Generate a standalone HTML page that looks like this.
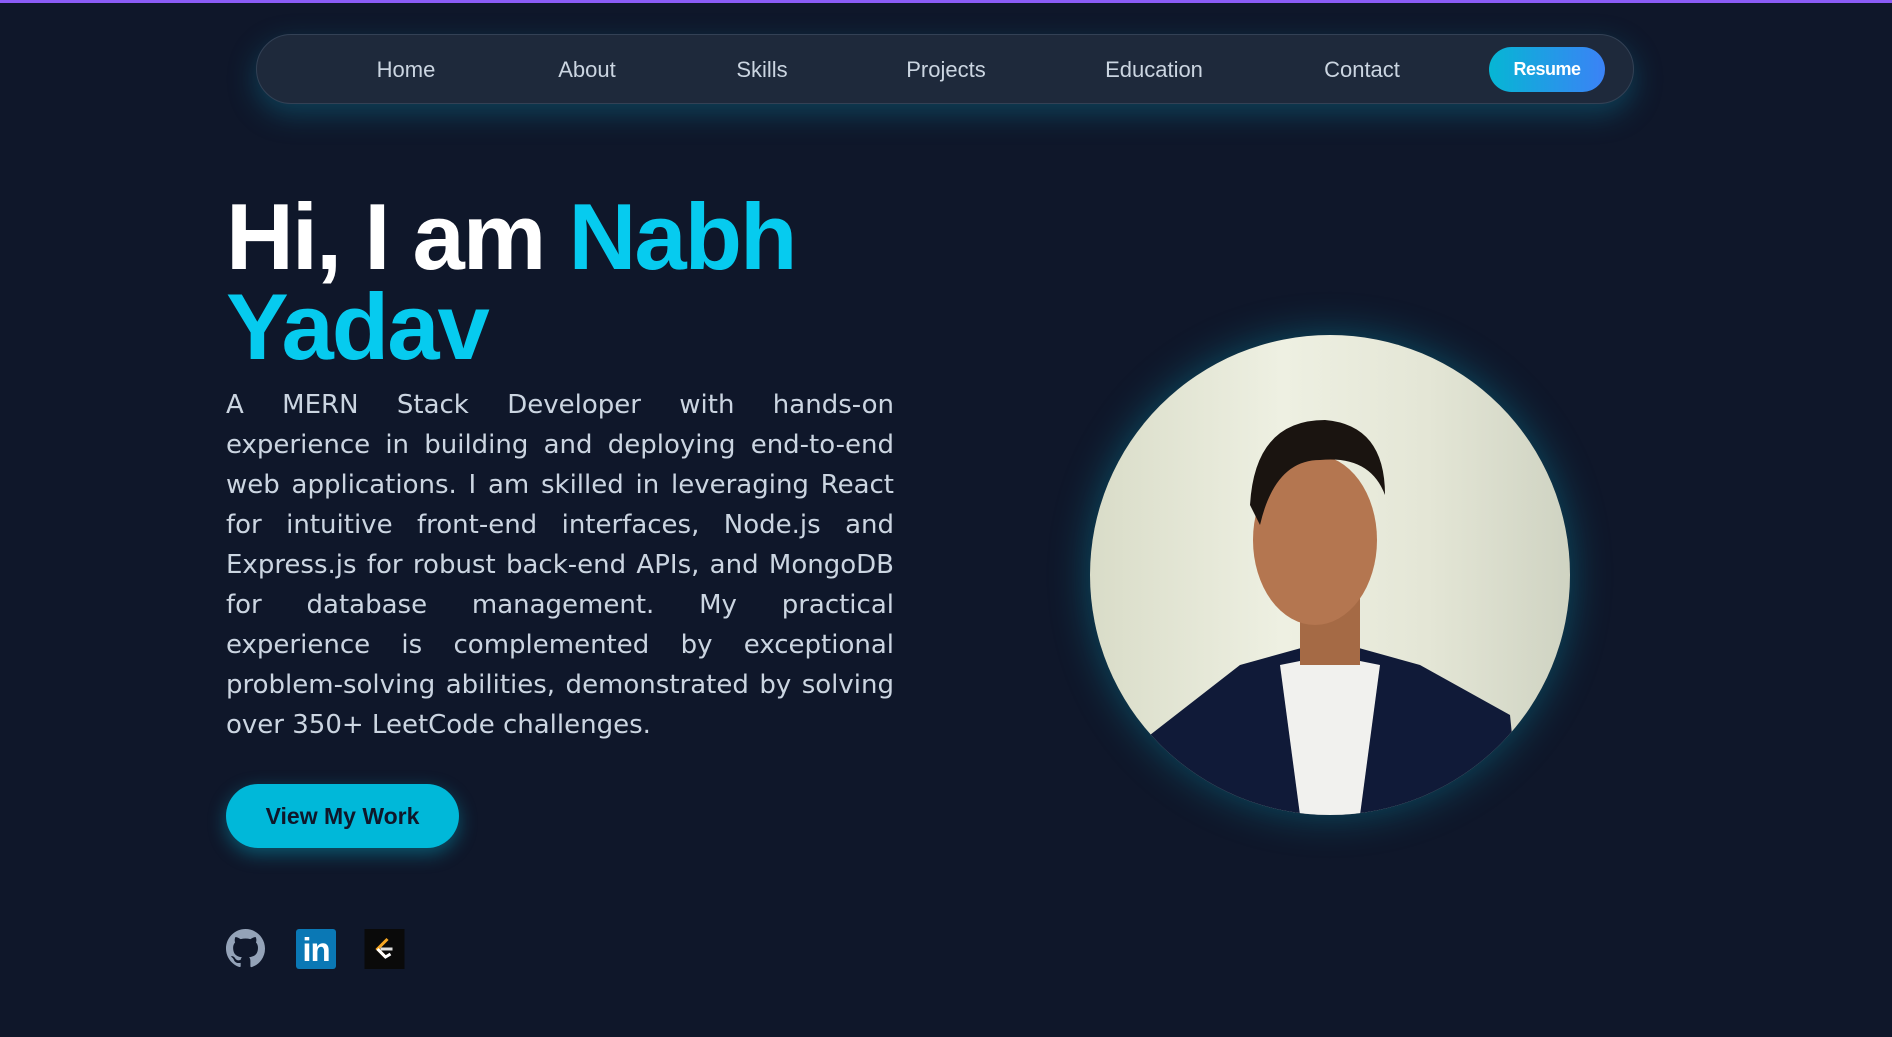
<!DOCTYPE html>
<html><head><meta charset="utf-8"><style>
*{margin:0;padding:0;box-sizing:border-box}
body{width:1892px;height:1037px;background:#0f172a;overflow:hidden;font-family:"Liberation Sans","DejaVu Sans",sans-serif;position:relative}
.top{position:absolute;left:0;top:0;width:100%;height:3px;background:#8b5cf6}
nav{position:absolute;left:256px;top:34px;width:1378px;height:70px;border-radius:35px;background:#1e293b;border:1px solid #334155;box-shadow:0 10px 28px rgba(14,116,144,.45)}
nav a{position:absolute;top:22px;color:#cbd5e1;font-size:22px;transform:translateX(-50%);white-space:nowrap}
.res{position:absolute;left:1232px;top:12px;width:116px;height:45px;border-radius:23px;background:linear-gradient(90deg,#06b6d4,#3b82f6);color:#fff;font-weight:bold;font-size:18px;text-align:center;line-height:45px;letter-spacing:-.5px}
h1{position:absolute;left:226px;top:192px;font-size:94px;line-height:90px;font-weight:900;color:#fff;letter-spacing:-2px;font-family:"Liberation Sans",sans-serif}
h1 span{color:#06cbef}
p{position:absolute;left:226px;top:385px;width:668px;font-size:26px;line-height:40px;color:#cbd5e1;text-align:justify;font-family:"DejaVu Sans",sans-serif}
.btn{position:absolute;left:226px;top:784px;width:233px;height:64px;border-radius:32px;background:#00b8d9;color:#0f172a;font-weight:bold;font-size:23px;text-align:center;line-height:64px;box-shadow:0 6px 18px rgba(6,182,212,.4)}
.photo{position:absolute;left:1090px;top:335px;width:480px;height:480px;border-radius:50%;overflow:hidden;box-shadow:0 0 40px rgba(6,182,212,.35);background:linear-gradient(90deg,#d9dcc8,#eef0e2 40%,#e4e6d6 70%,#cfd3c2)}
</style></head><body>
<div class="top"></div>
<nav>
<a style="left:149px">Home</a><a style="left:330px">About</a><a style="left:505px">Skills</a><a style="left:689px">Projects</a><a style="left:897px">Education</a><a style="left:1105px">Contact</a>
<div class="res">Resume</div>
</nav>
<h1>Hi, I am <span>Nabh<br>Yadav</span></h1>
<p>A MERN Stack Developer with hands-on experience in building and deploying end-to-end web applications. I am skilled in leveraging React for intuitive front-end interfaces, Node.js and Express.js for robust back-end APIs, and MongoDB for database management. My practical experience is complemented by exceptional problem-solving abilities, demonstrated by solving over 350+ LeetCode challenges.</p>
<div class="btn">View My Work</div>
<svg style="position:absolute;left:226px;top:929px" width="39" height="39" viewBox="0 0 16 16"><path fill="#94a3b8" d="M8 0C3.58 0 0 3.58 0 8c0 3.54 2.290 6.53 5.470 7.59.4.07.55-.17.55-.38v-1.33c-2.23.48-2.7-1.07-2.7-1.07-.36-.92-.89-1.170-.89-1.17-.73-.5.06-.49.06-.49.8.06 1.23.83 1.23.83.71 1.22 1.87.87 2.33.66.07-.52.28-.87.51-1.07-1.780-.2-3.64-.89-3.64-3.95 0-.87.31-1.59.82-2.15-.08-.2-.36-1.02.08-2.12 0 0 .67-.21 2.2.82a7.6 7.6 0 0 1 4 0c1.53-1.04 2.2-.82 2.2-.82.44 1.1.16 1.92.08 2.12.51.56.82 1.27.82 2.150 0 3.07-1.87 3.75-3.65 3.95.29.25.54.73.54 1.48v2.2c0 .21.15.46.55.38A8 8 0 0 0 16 8c0-4.42-3.58-8-8-8z"/></svg>
<div style="position:absolute;left:296px;top:929px;width:40px;height:40px;background:#0a78b5;border-radius:3px;color:#fff;font-weight:bold;font-size:33px;line-height:42px;text-align:center;letter-spacing:-1px">in</div>
<svg style="position:absolute;left:364px;top:929px" width="41" height="40" viewBox="0 0 40 40"><rect width="40" height="40" fill="#0a0a0a"/><path d="M23 10 L13 20 L21 28" fill="none" stroke="#f5a623" stroke-width="3"/><path d="M16 20 H28" stroke="#ddd" stroke-width="3"/><path d="M13 20 L21 28 L26 25" fill="none" stroke="#fff" stroke-width="3"/></svg>
<div class="photo">
<svg width="480" height="480" viewBox="0 0 480 480">
<path d="M50 480 L60 400 L150 330 L240 305 L330 330 L420 380 L430 480Z" fill="#101a38"/>
<path d="M190 330 L240 320 L290 330 L270 480 L210 480Z" fill="#f1f1ee"/>
<rect x="210" y="240" width="60" height="90" fill="#a56a45"/>
<ellipse cx="225" cy="205" rx="62" ry="85" fill="#b47650"/>
<path d="M160 170 Q165 85 235 85 Q295 90 295 160 Q280 120 230 125 Q185 125 170 190Z" fill="#1a1410"/>
</svg>
</div>
</body></html>
